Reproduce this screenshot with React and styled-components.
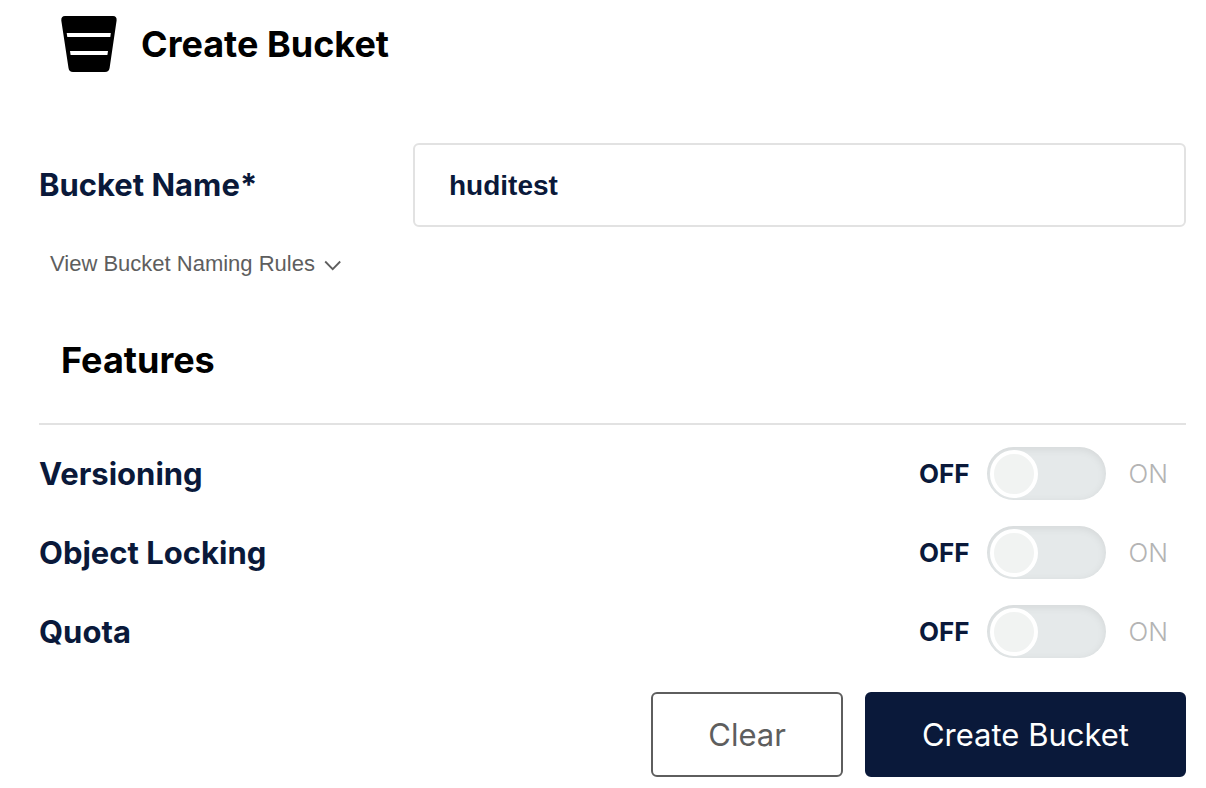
import React, { useState } from 'react';
import styled, { createGlobalStyle } from 'styled-components';

const palette = {
  navy: '#0a193a',
  black: '#000000',
  gray: '#5e5e5e',
  lightGray: '#b4b4b4',
  border: '#e2e2e2',
  track: '#e5e9ea',
  thumb: '#f1f3f2',
};

const GlobalStyle = createGlobalStyle`
  *,
  *::before {
    box-sizing: border-box;
  }
  body {
    margin: 0;
    background-color: #ffffff;
    font-family: Inter, sans-serif;
    color: ${palette.navy};
  }
`;

const Form = styled.form`
  padding: 15px 20px 11px 39px;
`;

const Header = styled.header`
  display: flex;
  align-items: center;
  gap: 24px;
  padding-left: 22px;
  svg {
    width: 56px;
    height: 56px;
  }
`;

const Title = styled.h1`
  margin: 0;
  font-size: 36px;
  line-height: 58px;
  font-weight: 700;
  color: ${palette.black};
`;

const Field = styled.div`
  display: grid;
  grid-template-columns: 374px 1fr;
  align-items: center;
  margin-top: 70px;
`;

const Label = styled.label`
  font-size: 31px;
  line-height: 40px;
  font-weight: 700;
`;

const TextInput = styled.input`
  width: 100%;
  height: 84px;
  padding: 2px 34px 0;
  border: 2px solid ${palette.border};
  border-radius: 6px;
  background-color: #ffffff;
  outline: none;
  color: ${palette.navy};
  font-family: 'Liberation Sans', Arial, sans-serif;
  font-size: 28px;
  font-weight: 700;
`;

const RulesButton = styled.button`
  display: flex;
  align-items: center;
  gap: 8px;
  margin: 21px 0 0 11px;
  padding: 0;
  border: none;
  background-color: transparent;
  color: ${palette.gray};
  font-family: 'Liberation Sans', Arial, sans-serif;
  font-size: 22px;
  line-height: 32px;
  cursor: pointer;
  svg {
    width: 20px;
    height: 20px;
    margin-top: 2px;
  }
`;

const SectionTitle = styled.h2`
  margin: 52px 0 0;
  padding: 0 22px 35px;
  border-bottom: 2px solid ${palette.border};
  font-size: 36px;
  line-height: 56px;
  font-weight: 700;
  color: ${palette.black};
`;

const FeatureList = styled.div`
  padding-top: 9px;
`;

const FeatureRow = styled.div`
  display: flex;
  align-items: center;
  justify-content: space-between;
  height: 79px;
`;

const Switch = styled.div`
  display: flex;
  align-items: center;
  padding-right: 18px;
`;

const SwitchText = styled.span`
  font-size: 26px;
  line-height: 32px;
  font-weight: ${({ $active }) => ($active ? 700 : 300)};
  color: ${({ $active }) => ($active ? palette.navy : palette.lightGray)};
`;

const Toggle = styled.input`
  appearance: none;
  display: flex;
  align-items: center;
  width: 119px;
  height: 53px;
  margin: 0 23px 0 17px;
  padding: 0 3px;
  border-radius: 27px;
  background-color: ${palette.track};
  box-shadow: inset 0 2px 8px rgba(0, 0, 0, 0.08);
  cursor: pointer;
  &::before {
    content: '';
    width: 48px;
    height: 48px;
    border: 4px solid #ffffff;
    border-radius: 50%;
    background-color: ${palette.thumb};
  }
  &:checked {
    justify-content: flex-end;
    background-color: #4ccb92;
  }
`;

const Actions = styled.div`
  display: flex;
  justify-content: flex-end;
  gap: 22px;
  margin-top: 21px;
`;

const Button = styled.button`
  height: 85px;
  padding: 0 55px;
  border: 2px solid ${({ $primary }) => ($primary ? palette.navy : palette.gray)};
  border-radius: 6px;
  background-color: ${({ $primary }) => ($primary ? palette.navy : '#ffffff')};
  color: ${({ $primary }) => ($primary ? '#ffffff' : palette.gray)};
  font-family: Inter, sans-serif;
  font-size: 31px;
  font-weight: 400;
  cursor: pointer;
`;

const BucketIcon = () => (
  <svg viewBox='0 0 56 56' aria-hidden='true'>
    <path d='M4 0H52Q56 0 55.6 4.5L48.6 52Q48 56 44 56H12Q8 56 7.5 52L0.3 4.5Q0 0 4 0Z' fill='#000000' />
    <path d='M5.7 17H49.8L49.3 21H6.3ZM9 35H47L46.4 39H9.6Z' fill='#ffffff' />
  </svg>
);

const ChevronIcon = () => (
  <svg viewBox='0 0 20 20' fill='none' aria-hidden='true'>
    <path d='M2.2 6.5L9.7 14.2L17.2 6.5' stroke='currentColor' strokeWidth='1.8' />
  </svg>
);

const features = [
  { id: 'versioning', name: 'Versioning' },
  { id: 'locking', name: 'Object Locking' },
  { id: 'quota', name: 'Quota' },
];

const App = () => {
  const [name, setName] = useState('huditest');
  const [enabled, setEnabled] = useState({});

  const toggleFeature = (id) => {
    setEnabled({ ...enabled, [id]: !enabled[id] });
  };
  const clearForm = () => {
    setName('');
    setEnabled({});
  };

  return (
    <>
      <GlobalStyle />
      <Form onSubmit={event => event.preventDefault()}>
        <Header>
          <BucketIcon />
          <Title>Create Bucket</Title>
        </Header>
        <Field>
          <Label htmlFor='bucket-name'>Bucket Name*</Label>
          <TextInput
            id='bucket-name'
            type='text'
            value={name}
            spellCheck={false}
            onChange={event => setName(event.target.value)}
          />
        </Field>
        <RulesButton type='button'>
          View Bucket Naming Rules
          <ChevronIcon />
        </RulesButton>
        <SectionTitle>Features</SectionTitle>
        <FeatureList>
          {
            features.map(feature => (
              <FeatureRow key={feature.id}>
                <Label htmlFor={feature.id}>{feature.name}</Label>
                <Switch>
                  <SwitchText $active={!enabled[feature.id]}>OFF</SwitchText>
                  <Toggle
                    id={feature.id}
                    type='checkbox'
                    checked={!!enabled[feature.id]}
                    onChange={() => toggleFeature(feature.id)}
                  />
                  <SwitchText $active={!!enabled[feature.id]}>ON</SwitchText>
                </Switch>
              </FeatureRow>
            ))
          }
        </FeatureList>
        <Actions>
          <Button type='button' onClick={clearForm}>Clear</Button>
          <Button type='submit' $primary>Create Bucket</Button>
        </Actions>
      </Form>
    </>
  );
};

export default App;
